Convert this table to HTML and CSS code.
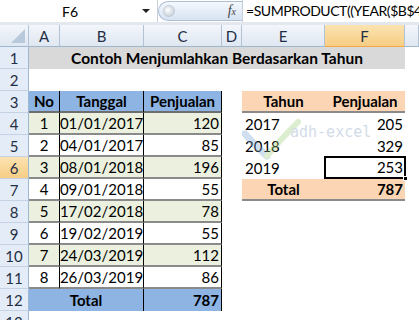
FILE: index.html
```html
<!DOCTYPE html>
<html>
<head>
<meta charset="utf-8">
<link rel="stylesheet" href="styles.css">
</head>
<body>
<div class="app">
  <div class="fbar">
    <div class="namebox"><span class="ref">F6</span><span class="arrow"></span></div>
    <div class="pill"><span class="knob"></span><span class="fx">f<small>x</small></span></div>
    <div class="formula">=SUMPRODUCT((YEAR($B$4:$B$11)=E6)*$C$4:$C$11)</div>
  </div>
  <div class="gap"></div>
  <div class="sheet">
    <div class="ch corner"><span class="tri"></span></div>
    <div class="ch">A</div><div class="ch">B</div><div class="ch">C</div><div class="ch">D</div><div class="ch">E</div><div class="ch sel">F</div><div class="ch"></div>

    <div class="rh">1</div><div class="title">Contoh Menjumlahkan Berdasarkan Tahun</div><div class="c"></div>
    <div class="rh">2</div><div class="c span7"></div>

    <div class="rh">3</div>
    <div class="c th">No</div><div class="c th">Tanggal</div><div class="c th lastc">Penjualan</div>
    <div class="c"></div>
    <div class="c ph">Tahun</div><div class="c ph">Penjualan</div><div class="c"></div>

    <div class="rh">4</div>
    <div class="c g ctr">1</div><div class="c g ctr">01/01/2017</div><div class="c g num lastc">120</div>
    <div class="c"></div><div class="c yr">2017</div><div class="c num">205</div><div class="c"></div>

    <div class="rh">5</div>
    <div class="c w ctr">2</div><div class="c w ctr">04/01/2017</div><div class="c w num lastc">85</div>
    <div class="c"></div><div class="c yr">2018</div><div class="c num">329</div><div class="c"></div>

    <div class="rh sel">6</div>
    <div class="c g ctr">3</div><div class="c g ctr">08/01/2018</div><div class="c g num lastc">196</div>
    <div class="c"></div><div class="c yr">2019</div><div class="c num active">253<span class="handle"></span></div><div class="c"></div>

    <div class="rh">7</div>
    <div class="c w ctr">4</div><div class="c w ctr">09/01/2018</div><div class="c w num lastc">55</div>
    <div class="c"></div><div class="c pt ctr b">Total</div><div class="c pt num b">787</div><div class="c"></div>

    <div class="rh">8</div>
    <div class="c g ctr">5</div><div class="c g ctr">17/02/2018</div><div class="c g num lastc">78</div><div class="c span4"></div>
    <div class="rh">9</div>
    <div class="c w ctr">6</div><div class="c w ctr">19/02/2019</div><div class="c w num lastc">55</div><div class="c span4"></div>
    <div class="rh">10</div>
    <div class="c g ctr">7</div><div class="c g ctr">24/03/2019</div><div class="c g num lastc">112</div><div class="c span4"></div>
    <div class="rh">11</div>
    <div class="c w ctr">8</div><div class="c w ctr">26/03/2019</div><div class="c w num lastc last">86</div><div class="c span4"></div>
    <div class="rh">12</div>
    <div class="c tot ctr b span2">Total</div><div class="c tot num b lastc">787</div><div class="c span4"></div>
    <div class="rh">13</div><div class="c span7"></div>
  </div>
  <div class="mark">
    <svg width="60" height="42" viewBox="0 0 60 42">
      <path d="M3 16 C10 24 18 32 25 38" stroke="#7aa6d6" stroke-width="7" fill="none" stroke-linecap="round"/>
      <path d="M25 38 C33 28 44 16 56 4" stroke="#9ccc7a" stroke-width="6" fill="none" stroke-linecap="round"/>
    </svg>
    <span class="mtext">adh-excel</span>
  </div>
</div>
</body>
</html>
```
FILE: styles.css
```css
* { box-sizing: border-box; }
html, body { margin: 0; padding: 0; background: #fff; }
body { font-family: Lato, "Open Sans", sans-serif; font-size: 15px; color: #000; }
.app { position: relative; width: 419px; height: 320px; overflow: hidden; }

.fbar { height: 22px; display: flex; align-items: stretch; background: #fff; }
.namebox { width: 158px; display: flex; align-items: center; position: relative; border-right: 1px solid #c5cfdc; }
.ref { width: 140px; text-align: center; font-size: 14px; }
.arrow { width: 0; height: 0; border-left: 4px solid transparent; border-right: 4px solid transparent; border-top: 4px solid #222; margin-left: 2px; }
.pill { width: 84px; margin: 1px 0; border-radius: 11px 0 0 11px; background: linear-gradient(#f4f8fd, #d7e3f2); border: 1px solid #aebfd5; border-right: none; display: flex; align-items: center; justify-content: space-between; padding: 0 6px 0 4px; }
.knob { width: 12px; height: 12px; border-radius: 50%; background: radial-gradient(circle at 40% 40%, #fff, #b9c4d0); border: 1px solid #c3cbd6; }
.fx { font-family: "Liberation Serif", serif; font-style: italic; font-size: 14px; color: #444; }
.fx small { font-size: 10px; }
.formula { flex: 1; padding-left: 3px; white-space: nowrap; overflow: hidden; line-height: 22px; font-size: 14px; letter-spacing: -0.45px; border-left: 1px solid #c5cfdc; }

.gap { height: 3px; background: #e3e8ef; }

.sheet { display: grid; grid-template-columns: 29px 31px 84px 78px 20px 83px 80px 1fr; grid-auto-rows: 22px; }
.ch { background: linear-gradient(#f3f6fb, #dfe7f1); border-right: 1px solid #b3c3d7; border-bottom: 1px solid #9eb6ce; display: flex; align-items: center; justify-content: center; color: #1f2f45; font-size: 15px; }
.ch.sel { background: linear-gradient(#fbe3b1, #f7cd84); border-bottom-color: #f2a946; }
.corner { position: relative; }
.tri { position: absolute; right: 3px; bottom: 3px; width: 0; height: 0; border-left: 14px solid transparent; border-bottom: 14px solid #b9c9dc; }
.rh { background: #e4ecf7; border-right: 1px solid #9eb6ce; border-bottom: 1px solid #c5d2e3; display: flex; align-items: center; justify-content: center; color: #1f2f45; font-size: 15px; }
.rh.sel { background: linear-gradient(#fbe3b1, #f7cd84); }

.c { display: flex; align-items: center; padding: 0 2px; white-space: nowrap; }
.span7 { grid-column: span 7; }
.span4 { grid-column: span 4; }
.span2 { grid-column: span 2; }
.title { grid-column: span 6; background: #d9d9d9; font-weight: bold; display: flex; align-items: center; justify-content: center; font-size: 15.5px; }
.ctr { justify-content: center; }
.num { justify-content: flex-end; }
.b { font-weight: bold; }
.th { background: #8db4e2; font-weight: bold; justify-content: center; border-right: 1px solid #000; border-bottom: 2px solid #6e6e6e; }
.g { background: #ebf1de; border-right: 1px solid #000; border-bottom: 2px solid #8a8a8a; }
.w { background: #fff; border-right: 1px solid #000; border-bottom: 2px solid #8a8a8a; }
.last { border-bottom-color: #8a8a8a; }
.tot { background: #8db4e2; border-right: 1px solid #000; }
.ph { background: #fcd5b4; font-weight: bold; justify-content: center; border-bottom: 2px solid #8a8a8a; }
.yr { padding-left: 3px; }
.pt { background: #fcd5b4; border-bottom: 2px solid #8a8a8a; }
.active { position: relative; border-bottom: 2px solid #8a8a8a; }
.active::after { content: ""; position: absolute; left: -1px; top: -1px; right: -1px; bottom: -2px; border: 2px solid #000; pointer-events: none; }
.handle { position: absolute; right: -3px; bottom: -4px; width: 5px; height: 5px; background: #000; border: 1px solid #fff; z-index: 2; }

.mark { position: absolute; left: 242px; top: 118px; width: 140px; height: 42px; opacity: 0.35; pointer-events: none; }
.mark svg { position: absolute; left: 0; top: 0; }
.mtext { position: absolute; left: 48px; top: 5px; font-family: "DejaVu Sans Mono", monospace; font-size: 15px; color: #7d9bbd; }
```
